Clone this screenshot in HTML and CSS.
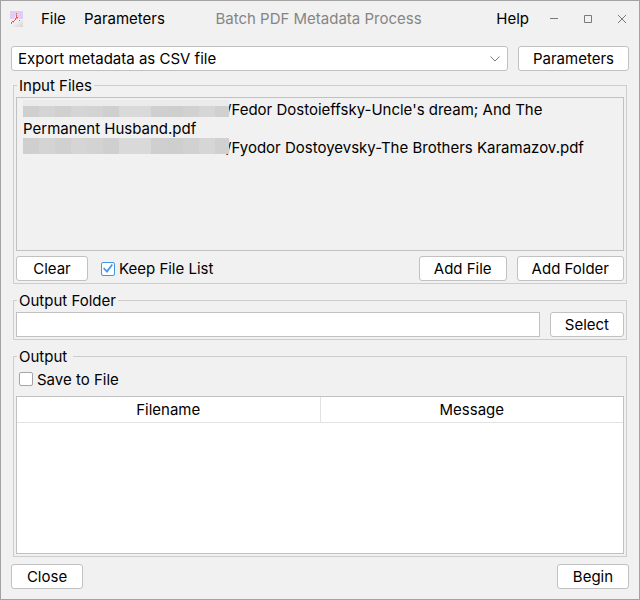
FILE: index.html
```html
<!DOCTYPE html>
<html lang="en">
<head>
<meta charset="utf-8">
<title>Batch PDF Metadata Process</title>
<link rel="stylesheet" href="styles.css">
</head>
<body>
<div class="window">
  <header class="titlebar">
    <nav class="menu">
      <svg class="app-icon" width="13" height="16" viewBox="0 0 13 16" aria-hidden="true">
        <defs>
          <linearGradient id="page" x1="0" y1="0" x2="1" y2="1">
            <stop offset="0.200" stop-color="#ffffff"/>
            <stop offset="1" stop-color="#d4d4d4"/>
          </linearGradient>
        </defs>
        <rect y="7" width="13" height="9" fill="url(#page)"/>
        <rect width="13" height="8" fill="#e2ccf6"/>
        <path d="M0 8h4l2-4h1l2 4h4v1L0 11z" fill="#f6eef6"/>
        <path d="M1 11h1v2H1zM2 10h2v1H2zM4 9h1v1H4zM5 7h1v2H5zM6 4h1v3H6zM6 2h1v1H6zM7 6h1v1H7zM9 9h1v1H9z" fill="#ee5350"/>
        <path d="M3 11h1v1H3zM6 3h1v1H6zM7 7h1v1H7zM6 7h1v1H6z" fill="#f29a9c"/>
      </svg>
      <button type="button" class="menu-item">File</button>
      <button type="button" class="menu-item">Parameters</button>
    </nav>
    <h1 class="title">Batch PDF Metadata Process</h1>
    <div class="window-controls">
      <button type="button" class="menu-item help">Help</button>
      <button type="button" class="control" aria-label="Minimize"><svg width="10" height="10" viewBox="0 0 10 10"><path d="M1 4.500h8"/></svg></button>
      <button type="button" class="control" aria-label="Maximize"><svg width="10" height="10" viewBox="0 0 10 10"><path d="M1.500 1.500h7v7h-7z"/></svg></button>
      <button type="button" class="control" aria-label="Close window"><svg width="10" height="10" viewBox="0 0 10 10"><path d="M1 1l8 8M9 1l-8 8"/></svg></button>
    </div>
  </header>

  <main class="content">
    <div class="row">
      <div class="combo">
        <select class="combo-select" aria-label="Process">
          <option>Export metadata as CSV file</option>
        </select>
        <svg class="combo-arrow" width="10" height="6" viewBox="0 0 10 6" aria-hidden="true"><path d="M.5.5L5 5 9.500.5"/></svg>
      </div>
      <button type="button" class="btn">Parameters</button>
    </div>

    <fieldset class="group">
      <legend>Input Files</legend>
      <div class="stack">
        <ul class="file-list">
          <li><span class="masked masked-low"></span>/Fedor Dostoieffsky-Uncle's dream; And The Permanent Husband.pdf</li>
          <li><span class="masked"></span>/Fyodor Dostoyevsky-The Brothers Karamazov.pdf</li>
        </ul>
        <div class="row">
          <button type="button" class="btn">Clear</button>
          <label class="check check-keep"><input type="checkbox" checked>Keep File List</label>
          <button type="button" class="btn push">Add File</button>
          <button type="button" class="btn">Add Folder</button>
        </div>
      </div>
    </fieldset>

    <fieldset class="group">
      <legend>Output Folder</legend>
      <div class="row">
        <input type="text" class="field" aria-label="Output folder">
        <button type="button" class="btn">Select</button>
      </div>
    </fieldset>

    <fieldset class="group">
      <legend class="wide">Output</legend>
      <label class="check check-save"><input type="checkbox">Save to File</label>
      <div class="table-box">
        <table class="results">
          <thead><tr><th>Filename</th><th>Message</th></tr></thead>
          <tbody></tbody>
        </table>
      </div>
    </fieldset>

    <footer class="footer">
      <button type="button" class="btn">Close</button>
      <button type="button" class="btn">Begin</button>
    </footer>
  </main>
</div>
</body>
</html>
```
FILE: styles.css
```css
* { box-sizing: border-box; }

body {
  margin: 0;
  background: #f1f1f1;
  color: #000;
  font: 15px/19px Inter, sans-serif;
}

button, input, select { font: inherit; color: inherit; }

.window {
  display: flex;
  flex-direction: column;
  min-height: 100vh;
  border: 1px solid #a3a3a3;
}

/* Title bar */
.titlebar {
  display: grid;
  grid-template-columns: 1fr auto 1fr;
  align-items: center;
  height: 35px;
  padding: 0 12px 0 9px;
}

.menu { display: flex; align-items: center; gap: 18px; }
.menu-item { padding: 0; border: 0; background: none; }

.title {
  margin: 0;
  color: #858585;
  font-size: 15px;
  font-weight: 400;
}

.window-controls {
  display: flex;
  align-items: center;
  justify-content: flex-end;
  gap: 24px;
}

.help { margin-right: -4px; }

.control {
  display: flex;
  padding: 0;
  border: 0;
  background: none;
}

.control svg { fill: none; stroke: #7d7779; }

/* Main area */
.content {
  display: flex;
  flex-direction: column;
  padding: 10px;
}

.row { display: flex; align-items: center; gap: 10px; }

.btn {
  min-width: 72px;
  height: 25px;
  padding: 0 14px;
  border: 1px solid #c1c1c1;
  border-radius: 3px;
  background: #fff;
  white-space: nowrap;
}

.push { margin-left: auto; }

.combo { display: grid; flex: 1; align-items: center; }

.combo-select {
  grid-area: 1 / 1;
  width: 100%;
  height: 25px;
  padding: 0 24px 0 6px;
  border: 1px solid #c1c1c1;
  border-radius: 3px;
  background: #fff;
  appearance: none;
}

.combo-arrow {
  grid-area: 1 / 1;
  justify-self: end;
  margin-right: 8px;
  fill: none;
  stroke: #777;
  pointer-events: none;
}

.group {
  min-width: 0;
  margin: 5px 2px 0;
  padding: 2px;
  border: 1px solid #cdcdcd;
}

.group + .group { margin-top: 7px; }

legend { margin-left: 1px; padding: 0 2px; }
.wide { padding-right: 6px; }

.stack { display: flex; flex-direction: column; gap: 5px; }

.file-list {
  height: 154px;
  margin: 0;
  padding: 2px 6px;
  border: 1px solid #c1c1c1;
  list-style: none;
  overflow: auto;
}

/* Hidden part of a path; covers the edge of the text that follows */
.masked {
  display: inline-block;
  position: relative;
  width: 206px;
  height: 16px;
  margin-right: -3px;
  vertical-align: top;
  background: linear-gradient(90deg,
    #cecfce 0 16px, #d3d4d3 16px 32px, #d1d0cf 32px 48px, #d5d5d5 48px 64px,
    #d3d3d3 64px 80px, #cfcfcf 80px 96px, #d9d9d9 96px 128px, #cfcfcf 128px 144px,
    #cdcfcc 144px 160px, #d1d1d1 160px 176px, #d6d6d6 176px 192px, #d0d0d0 192px);
}

.masked-low { height: 17px; border-top: 6px solid #ebebeb; }

.check { display: flex; align-items: center; gap: 4px; }
.check-keep { margin-left: 3px; }

.check input {
  width: 14px;
  height: 14px;
  margin: 0;
  border: 1px solid #a5a5a5;
  border-radius: 2px;
  background: #fff;
  appearance: none;
}

.check input:checked { display: grid; place-items: center; border-color: #4095e5; }

.check input:checked::before {
  width: 10px;
  height: 10px;
  background: #4095e5;
  clip-path: polygon(0 50%, 12% 40%, 38% 68%, 86% 4%, 100% 14%, 40% 96%);
  content: "";
}

.field {
  flex: 1;
  min-width: 0;
  height: 25px;
  padding: 0 6px;
  border: 1px solid #c1c1c1;
  background: #fff;
}

.check-save { height: 22px; padding-left: 3px; margin-bottom: 6px; }

.table-box {
  min-height: 158px;
  border: 1px solid #c1c1c1;
  background: #fff;
}

.results { width: 100%; border-collapse: collapse; table-layout: fixed; }

.results th {
  height: 25px;
  padding: 0;
  border-bottom: 1px solid #e2e2e2;
  font-weight: 400;
}

.results th + th { border-left: 1px solid #e2e2e2; }

.footer { display: flex; justify-content: space-between; margin-top: 7px; }
```
